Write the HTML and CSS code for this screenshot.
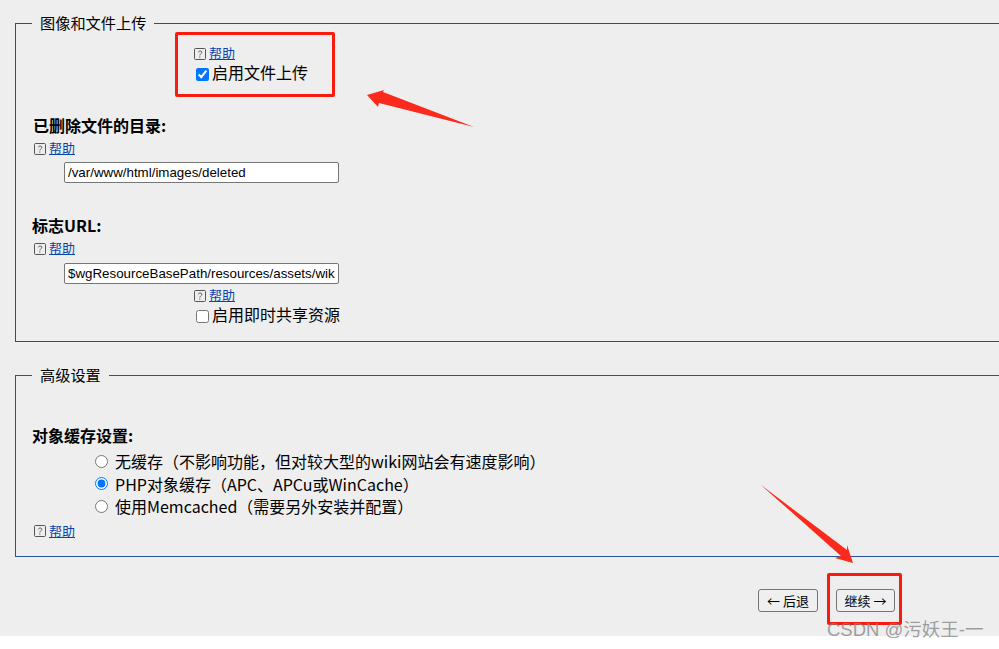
FILE: index.html
```html
<!DOCTYPE html>
<html lang="zh-CN">
<head>
<meta charset="utf-8">
<title>MediaWiki 安装</title>
<link rel="stylesheet" href="styles.css">
</head>
<body>
<main class="page">
  <form class="form">
    <fieldset class="group group-upload">
      <legend>图像和文件上传</legend>
      <div class="field-indent">
        <div class="help"><svg class="help-icon" viewBox="0 0 13 13"><rect x="0.500" y="0.500" width="11" height="11" rx="1" /><path d="M4.500 4.300c.2-1.800 3.600-1.700 3.300.2-.2 1.300-1.700 1.300-1.900 2.900" /><path d="M5.800 8.500v1.200" /></svg><a href="#">帮助</a></div>
        <label class="check"><input type="checkbox" checked>启用文件上传</label>
      </div>
      <h3 class="label label-deleted">已删除文件的目录:</h3>
      <div class="help help-left"><svg class="help-icon" viewBox="0 0 13 13"><rect x="0.500" y="0.500" width="11" height="11" rx="1" /><path d="M4.500 4.300c.2-1.800 3.600-1.700 3.300.2-.2 1.300-1.700 1.300-1.900 2.900" /><path d="M5.800 8.500v1.200" /></svg><a href="#">帮助</a></div>
      <input class="text" type="text" value="/var/www/html/images/deleted">
      <h3 class="label label-logo">标志URL:</h3>
      <div class="help help-left"><svg class="help-icon" viewBox="0 0 13 13"><rect x="0.500" y="0.500" width="11" height="11" rx="1" /><path d="M4.500 4.300c.2-1.800 3.600-1.700 3.300.2-.2 1.300-1.700 1.300-1.900 2.900" /><path d="M5.800 8.500v1.200" /></svg><a href="#">帮助</a></div>
      <input class="text" type="text" value="$wgResourceBasePath/resources/assets/wiki.png">
      <div class="field-indent field-instant">
        <div class="help"><svg class="help-icon" viewBox="0 0 13 13"><rect x="0.500" y="0.500" width="11" height="11" rx="1" /><path d="M4.500 4.300c.2-1.800 3.600-1.700 3.300.2-.2 1.300-1.700 1.300-1.900 2.900" /><path d="M5.800 8.500v1.200" /></svg><a href="#">帮助</a></div>
        <label class="check"><input type="checkbox">启用即时共享资源</label>
      </div>
    </fieldset>
    <fieldset class="group group-advanced">
      <legend>高级设置</legend>
      <h3 class="label label-cache">对象缓存设置:</h3>
      <div class="radios">
        <label class="radio"><input type="radio" name="cache">无缓存（不影响功能，但对较大型的wiki网站会有速度影响）</label>
        <label class="radio"><input type="radio" name="cache" checked>PHP对象缓存（APC、APCu或WinCache）</label>
        <label class="radio"><input type="radio" name="cache">使用Memcached（需要另外安装并配置）</label>
      </div>
      <div class="help help-left help-cache"><svg class="help-icon" viewBox="0 0 13 13"><rect x="0.500" y="0.500" width="11" height="11" rx="1" /><path d="M4.500 4.300c.2-1.800 3.600-1.700 3.300.2-.2 1.300-1.700 1.300-1.900 2.900" /><path d="M5.800 8.500v1.200" /></svg><a href="#">帮助</a></div>
    </fieldset>
    <div class="actions">
      <button type="button" class="btn">← 后退</button>
      <button type="button" class="btn btn-next">继续 →</button>
    </div>
  </form>
</main>
<div class="mark mark-upload"></div>
<div class="mark mark-continue"></div>
<svg class="arrows" viewBox="0 0 999 649">
  <polygon points="367,95 384,90 383,92 474,127 379,103 378,107" />
  <polygon points="761,485 847,550 847,545 853,563 835,558 841,556" />
</svg>
<div class="watermark">CSDN @污妖王-一</div>
</body>
</html>
```

FILE: styles.css
```css
* { box-sizing: border-box; }
html, body { margin: 0; padding: 0; background: #fff; overflow: hidden; }
body {
  width: 999px;
  height: 649px;
  position: relative;
  font-family: "Liberation Sans", "Noto Sans CJK SC", sans-serif;
  color: #000;
}
.page { height: 636px; background: #eee; overflow: hidden; }
.form { width: 1100px; padding: 15px 0 0 15px; }
.group {
  margin: 0;
  min-width: 0;
  padding: 0 16px;
  border: 0;
  border-top: 1px solid #2f4b8b;
  border-left: 1px solid #2f4b8b;
  border-bottom: 1px solid #2f4b8b;
}
.group legend { padding: 0 8px; font-size: 15.200px; line-height: 17px; }
.group-upload { height: 327px; }
.group-advanced { height: 190px; margin-top: 25px; border-color: #2650a0; }
.field-indent { margin-left: 162px; padding-top: 14px; }
.field-instant { padding-top: 4px; }
.help { display: flex; align-items: center; gap: 2px; height: 16px; font-size: 13px; line-height: 16px; }
.help a { color: #0645ad; text-decoration: underline; }
.help-icon { width: 13px; height: 13px; flex: none; fill: none; stroke: #555; stroke-width: 1; }
.help-left { margin-left: 2px; margin-top: 5px; }
.help-cache { margin-top: 6px; }
.check { display: flex; align-items: center; height: 24px; margin-left: 2px; font-size: 16px; line-height: 24px; }
.check input { width: 13px; height: 13px; margin: 0 3px 0 0; accent-color: #0075ff; }
.label { margin: 0; font-family: "Noto Sans CJK SC", sans-serif; font-size: 16px; line-height: 22px; font-weight: 700; }
.label-deleted { margin-top: 28px; margin-left: 1px; }
.label-logo { margin-top: 31px; }
.label-cache { margin-top: 40px; }
.text {
  display: block;
  width: 275px;
  height: 21px;
  margin: 5px 0 0 32px;
  padding: 1px 3px;
  border: 1px solid #767676;
  border-radius: 2px;
  background: #fff;
  font: 13.330px "Liberation Sans", sans-serif;
}
.label-logo + .help + .text { margin-top: 6px; }
.radios { display: flex; flex-direction: column; margin-top: 4px; margin-left: 63px; }
.radio { display: flex; align-items: center; height: 22.500px; font-family: "Noto Sans CJK SC", sans-serif; font-size: 16px; }
.radio input { width: 13px; height: 13px; margin: 0 7px 0 0; accent-color: #0075ff; }
.actions { display: flex; justify-content: flex-end; gap: 18px; width: 880px; margin-top: 32px; }
.btn {
  height: 23px;
  width: 60px;
  padding: 0;
  border: 1px solid #767676;
  border-radius: 3px;
  background: #efefef;
  color: #000;
  font: 13px "Noto Sans CJK SC", sans-serif;
}
.btn-next { width: 59px; }
.mark { position: absolute; border: 3px solid #fb1a10; border-radius: 2px; }
.mark-upload { left: 175px; top: 32px; width: 160px; height: 65px; }
.mark-continue { left: 827px; top: 573px; width: 75px; height: 52px; }
.arrows { position: absolute; left: 0; top: 0; width: 999px; height: 649px; fill: #fb2a1c; }
.watermark {
  position: absolute;
  left: 827px;
  top: 618px;
  font-size: 18.500px;
  line-height: 24px;
  white-space: nowrap;
  color: rgba(130, 130, 130, 0.75);
}
```
